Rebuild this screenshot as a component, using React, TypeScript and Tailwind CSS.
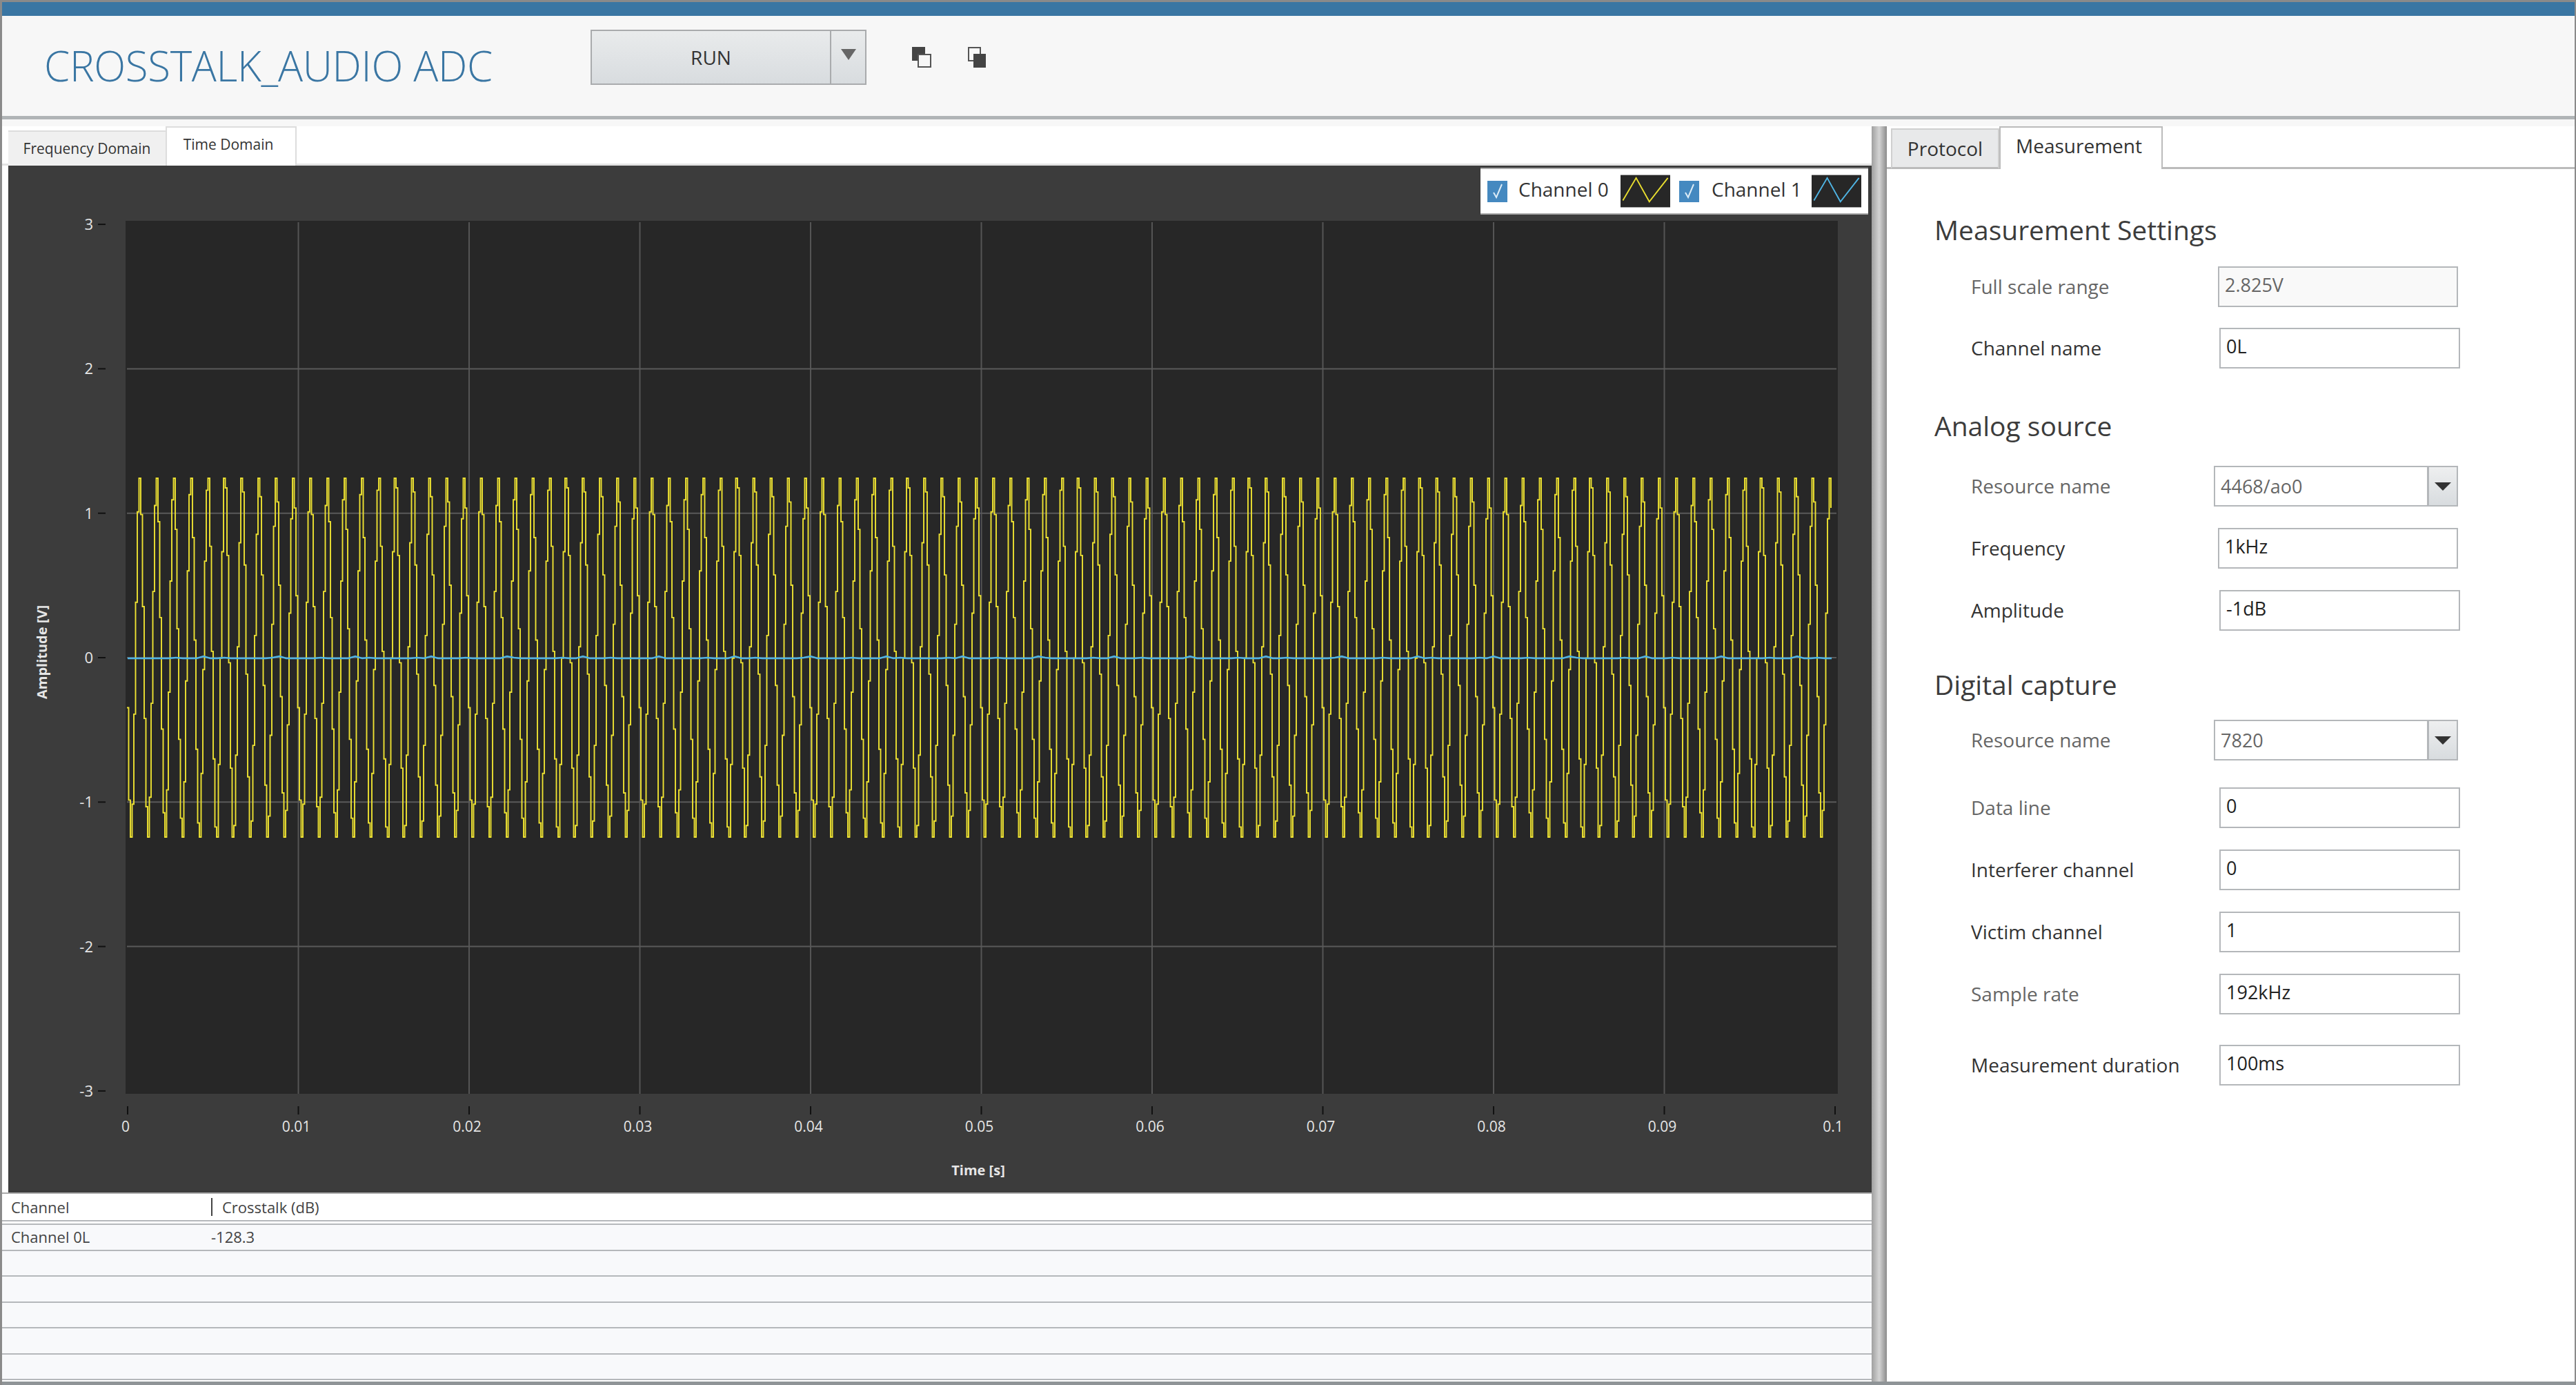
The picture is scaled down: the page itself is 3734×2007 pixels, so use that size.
const X0 = 185
const XSCALE = 24750
const Y0 = 953
const YSCALE = 209.3
const PERIOD = 24.75
const STEP = 2.5

const xTicks = [0, 0.01, 0.02, 0.03, 0.04, 0.05, 0.06, 0.07, 0.08, 0.09, 0.1]
const yTicks = [3, 2, 1, 0, -1, -2, -3]

function columnValue(x: number) {
  // the plot keeps the extreme of each pixel column, so every peak reaches full height
  const from = (2 * (x - 18.7)) / PERIOD
  const to = (2 * (x + STEP - 18.7)) / PERIOD
  const edge = Math.ceil(from)
  if (edge < to) return edge % 2 === 0 ? 1 : -1
  return Math.cos((2 * Math.PI * (x + STEP / 2 - 18.7)) / PERIOD)
}

function buildChannel0() {
  let d = ''
  for (let i = 0; i <= 988; i++) {
    const x = i * STEP
    const y = Y0 - 260 * columnValue(x)
    const px = (X0 - 1 + x).toFixed(1)
    d += i === 0 ? `M${px} ${y.toFixed(1)}` : `H${px}V${y.toFixed(1)}`
  }
  return d
}

function buildChannel1() {
  let d = `M${X0} ${Y0 + 1}`
  for (let i = 1; i <= 247; i++) {
    const bump = (i * 37) % 11 === 0 ? 3 : (i * 13) % 7 === 0 ? 1 : 0
    d += `L${X0 + i * 10} ${Y0 + 1 - bump}`
  }
  return d
}

function Chart() {
  return (
    <svg viewBox="12 240 2701 1488" className="block w-full h-full" fontFamily="'Open Sans', sans-serif">
      <rect x="12" y="240" width="2701" height="1488" fill="#3c3c3c" />
      <rect x="182" y="320" width="2482" height="1265" fill="#272727" />
      {xTicks.map(t => {
        const x = X0 + t * XSCALE
        return (
          <g key={t}>
            {t > 0 && t < 0.1 && <line x1={x} x2={x} y1="322" y2="1585" stroke="#555" strokeWidth="2" />}
            <line x1={x} x2={x} y1="1603" y2="1615" stroke="#111" strokeWidth="2" />
            <text x={x - 3} y="1640" fill="#e6e6e6" fontSize="21" textAnchor="middle">{t}</text>
          </g>
        )
      })}
      {yTicks.map(t => {
        const y = Y0 - t * YSCALE
        return (
          <g key={t}>
            {Math.abs(t) < 3 && <line x1="184" x2="2662" y1={y} y2={y} stroke="#5a5a5a" strokeWidth="2" />}
            <line x1="142" x2="153" y1={y} y2={y} stroke="#111" strokeWidth="2" />
            <text x="135" y={y + 8} fill="#e6e6e6" fontSize="22" textAnchor="end">{t}</text>
          </g>
        )
      })}
      <path d={buildChannel0()} fill="none" stroke="#eee232" strokeWidth="1.9" />
      <path d={buildChannel1()} fill="none" stroke="#4fb4e4" strokeWidth="2.4" />
      <text x="1418" y="1703" fill="#e6e6e6" fontSize="20" fontWeight="700" textAnchor="middle">Time [s]</text>
      <text transform="translate(68 945) rotate(-90)" fill="#e6e6e6" fontSize="20" fontWeight="700" textAnchor="middle">Amplitude [V]</text>
    </svg>
  )
}

function LegendCheck() {
  return (
    <span className="flex items-center justify-center w-[29px] h-[31px] bg-[#4589c0]">
      <svg width="20" height="24" viewBox="0 0 20 24">
        <path d="M4 14 L8 21 L16 2" fill="none" stroke="#dcecf7" strokeWidth="2" />
      </svg>
    </span>
  )
}

function LegendSwatch({ color }: { color: string }) {
  return (
    <svg width="72" height="48" viewBox="0 0 72 48" className="bg-[#272727] border-y border-[#aaa]">
      <path d="M2 38 L22 4 L42 40 L70 4" fill="none" stroke={color} strokeWidth="2" />
    </svg>
  )
}

function Legend() {
  return (
    <div className="absolute right-[5px] top-[3px] w-[562px] h-[68px] bg-white border-t-2 border-b-2 border-[#aaa] flex items-center pl-[10px] text-[28px] text-[#333]">
      <LegendCheck />
      <span className="ml-[16px] w-[148px] pb-[7px]">Channel 0</span>
      <LegendSwatch color="#e9de2f" />
      <span className="ml-[13px]"><LegendCheck /></span>
      <span className="ml-[18px] w-[145px] pb-[7px]">Channel 1</span>
      <LegendSwatch color="#4fb4e4" />
    </div>
  )
}

function ToolIcon({ flip }: { flip?: boolean }) {
  return (
    <svg width="28" height="30" viewBox="0 0 28 30">
      {flip ? (
        <>
          <rect x="1" y="1" width="17" height="19" fill="#f7f7f7" stroke="#555" strokeWidth="2" />
          <rect x="8" y="10" width="18" height="20" fill="#444" />
        </>
      ) : (
        <>
          <rect x="0" y="0" width="19" height="20" fill="#444" />
          <rect x="9" y="11" width="18" height="18" fill="#f7f7f7" stroke="#555" strokeWidth="2" />
        </>
      )}
    </svg>
  )
}

function Header() {
  return (
    <div className="h-[150px] shrink-0 bg-[#f7f7f7] border-b-[5px] border-[#b0b4b6] flex items-start">
      <div className="ml-[61px] w-[792px] pt-[31px] text-[60px] font-light leading-[82px] tracking-[-0.3px] text-[#3a76a3] whitespace-nowrap">CROSSTALK_AUDIO ADC</div>
      <div className="mt-[20px] w-[400px] h-[80px] flex border-2 border-[#a9abad] bg-gradient-to-b from-[#e9ebec] to-[#d8dcdf]">
        <div className="w-[347px] border-r-2 border-[#a9abad] flex items-center justify-center text-[28px] text-[#333]">RUN</div>
        <div className="flex-1 flex items-center justify-center pb-[8px]">
          <svg width="22" height="16" viewBox="0 0 22 16"><path d="M0 0 H22 L11 16 Z" fill="#666" /></svg>
        </div>
      </div>
      <div className="mt-[45px] ml-[66px] flex gap-[53px]">
        <ToolIcon />
        <ToolIcon flip />
      </div>
    </div>
  )
}

function PlotTabs() {
  return (
    <div className="h-[57px] shrink-0 flex items-end pl-[9px] border-b-[3px] border-[#e4e4e4] bg-white">
      <div className="w-[228px] h-[51px] -mb-[3px] bg-[#f0f0f0] border-t-2 border-[#ddd] flex items-center justify-center text-[21px] text-[#333]">Frequency Domain</div>
      <div className="w-[190px] h-[57px] -mb-[3px] bg-white border-x-2 border-t-2 border-[#ddd] flex items-start justify-center pt-[9px] pr-[8px] text-[21px] text-[#333]">Time Domain</div>
    </div>
  )
}

function ResultTable() {
  const blank = [1, 2, 3, 4, 5]
  return (
    <div className="flex-1 bg-white border-t-2 border-[#aaa] text-[22px] text-[#444]">
      <div className="h-[38px] flex items-center pl-[13px]">
        <span className="w-[290px]">Channel</span>
        <span className="border-l-2 border-[#444] pl-[14px] leading-[26px]">Crosstalk (dB)</span>
      </div>
      <div className="h-[7px] border-y-2 border-[#b5b8bb]" />
      <div className="h-[37.5px] flex items-center pl-[13px] bg-[#f8f9fb] border-b-2 border-[#b5b8bb]">
        <span className="w-[290px]">Channel 0L</span>
        <span>-128.3</span>
      </div>
      {blank.map(i => (
        <div key={i} className="h-[37.5px] bg-[#f8f9fb] border-b-2 border-[#b5b8bb]" />
      ))}
    </div>
  )
}

function LeftPane() {
  return (
    <div className="w-[2710px] shrink-0 flex flex-col">
      <PlotTabs />
      <div className="relative h-[1488px] shrink-0 ml-[9px]">
        <Chart />
        <Legend />
      </div>
      <ResultTable />
    </div>
  )
}

function FieldBox({ value, readOnly, className }: { value: string; readOnly?: boolean; className: string }) {
  return (
    <div className={`h-[59px] border-2 border-[#b4b7ba] pl-[8px] pt-[7px] text-[27px] leading-[36px] ${readOnly ? 'bg-[#f9f9f9] text-[#666]' : 'bg-white text-[#222]'} ${className}`}>
      {value}
    </div>
  )
}

function SelectBox({ value }: { value: string }) {
  return (
    <div className="w-[354px] h-[59px] border-2 border-[#b4b7ba] flex text-[27px] text-[#666]">
      <div className="flex-1 pl-[8px] pt-[10px] leading-[36px]">{value}</div>
      <div className="w-[43px] border-l-[3px] border-[#b4b7ba] bg-gradient-to-b from-[#eeeff0] to-[#d8dcdf] flex items-center justify-center">
        <svg width="24" height="12" viewBox="0 0 24 12"><path d="M0 0 H24 L12 12 Z" fill="#333" /></svg>
      </div>
    </div>
  )
}

function Row({ label, mt, children, dim }: { label: string; mt: string; children: React.ReactNode; dim?: boolean }) {
  return (
    <div className={`flex items-center pl-[53px] ${mt}`}>
      <span className={`w-[358px] pb-[1px] text-[28px] whitespace-nowrap ${dim ? 'text-[#666]' : 'text-[#333]'}`}>{label}</span>
      {children}
    </div>
  )
}

function SectionTitle({ text, mt }: { text: string; mt: string }) {
  return <div className={`h-[52px] text-[39px] leading-[48px] text-[#3c3c3c] ${mt}`}>{text}</div>
}

function RightPane() {
  return (
    <div className="flex-1 flex flex-col bg-white">
      <div className="h-[62px] shrink-0 flex items-end pl-[6px] border-b-[3px] border-[#bbb]">
        <div className="w-[157px] h-[59px] -mb-[3px] bg-[#e8e9ea] border-2 border-[#cfcfcf] border-b-[3px] border-b-[#bbb] flex items-center justify-center text-[28px] text-[#333]">Protocol</div>
        <div className="w-[237px] h-[62px] -mb-[3px] bg-white border-x-2 border-t-2 border-[#bbb] flex items-start justify-center pt-[5px] pr-[6px] text-[28px] text-[#333]">Measurement</div>
      </div>
      <div className="pl-[69px]">
        <SectionTitle text="Measurement Settings" mt="mt-[64px]" />
        <Row label="Full scale range" mt="mt-[25px]" dim><FieldBox value="2.825V" readOnly className="w-[348px]" /></Row>
        <Row label="Channel name" mt="mt-[30px]"><FieldBox value="0L" className="w-[349px] ml-[2px]" /></Row>
        <SectionTitle text="Analog source" mt="mt-[59px]" />
        <Row label="Resource name" mt="mt-[30px]" dim><div className="-ml-[6px]"><SelectBox value="4468/ao0" /></div></Row>
        <Row label="Frequency" mt="mt-[31px]"><FieldBox value="1kHz" className="w-[348px]" /></Row>
        <Row label="Amplitude" mt="mt-[31px]"><FieldBox value="-1dB" className="w-[349px] ml-[2px]" /></Row>
        <SectionTitle text="Digital capture" mt="mt-[54px]" />
        <Row label="Resource name" mt="mt-[23px]" dim><div className="-ml-[6px]"><SelectBox value="7820" /></div></Row>
        <Row label="Data line" mt="mt-[39px]" dim><FieldBox value="0" className="w-[349px] ml-[2px]" /></Row>
        <Row label="Interferer channel" mt="mt-[31px]"><FieldBox value="0" className="w-[349px] ml-[2px]" /></Row>
        <Row label="Victim channel" mt="mt-[31px]"><FieldBox value="1" className="w-[349px] ml-[2px]" /></Row>
        <Row label="Sample rate" mt="mt-[31px]" dim><FieldBox value="192kHz" className="w-[349px] ml-[2px]" /></Row>
        <Row label="Measurement duration" mt="mt-[44px]"><FieldBox value="100ms" className="w-[349px] ml-[2px]" /></Row>
      </div>
    </div>
  )
}

export default function App() {
  return (
    <div className="w-[3734px] h-[2007px] overflow-hidden flex flex-col bg-white border-l-[3px] border-r-[2px] border-[#8a8a8a] font-['Open_Sans',sans-serif]">
      <div className="h-[3px] shrink-0 bg-[#8a8a8a]" />
      <div className="h-[20px] shrink-0 bg-[#3a76a3]" />
      <Header />
      <div className="h-[10px] shrink-0 bg-[#f7f7f7]" />
      <div className="flex-1 min-h-0 flex">
        <LeftPane />
        <div className="w-[22px] shrink-0 bg-gradient-to-r from-[#a0a0a0] via-[#d4d4d4] to-[#8c8c8c]" />
        <RightPane />
      </div>
      <div className="h-[5px] shrink-0 bg-[#8f9497]" />
    </div>
  )
}
